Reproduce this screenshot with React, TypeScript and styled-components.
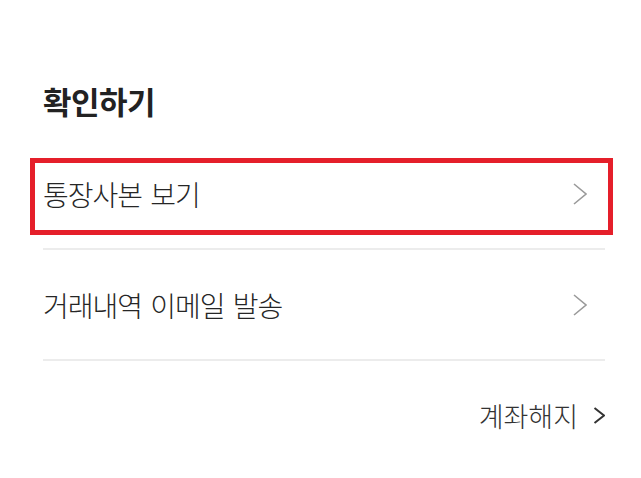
import React from "react";
import styled, { createGlobalStyle } from "styled-components";

const GlobalStyle = createGlobalStyle`
  html, body {
    margin: 0;
    padding: 0;
    background: #ffffff;
  }
  body {
    font-family: "Noto Sans CJK KR", "Noto Sans", sans-serif;
    color: #222222;
  }
`;

const Page = styled.div`
  width: 641px;
  height: 478px;
  box-sizing: border-box;
  padding: 82px 36px 0 43px;
  display: flex;
  flex-direction: column;
  background: #ffffff;
`;

const Title = styled.h1`
  margin: 0 0 20px 0;
  font-size: 31px;
  line-height: 37px;
  font-weight: 700;
  letter-spacing: -0.5px;
  color: #222222;
`;

const List = styled.ul`
  list-style: none;
  margin: 0;
  padding: 0;
  display: flex;
  flex-direction: column;
`;

const Row = styled.li`
  position: relative;
  height: 109px;
  display: flex;
  align-items: center;
  justify-content: space-between;
  padding-right: 18px;
  border-bottom: 2px solid #ececec;
`;

const RowLabel = styled.span`
  font-size: 28px;
  font-weight: 300;
  letter-spacing: -1px;
  word-spacing: 3px;
  color: #262626;
`;

const Highlight = styled.div`
  position: absolute;
  left: -13px;
  top: 19px;
  width: 583px;
  height: 77px;
  box-sizing: border-box;
  border: 5px solid #e51f2a;
  pointer-events: none;
`;

const Footer = styled.div`
  height: 109px;
  display: flex;
  align-items: center;
  justify-content: flex-end;
  gap: 15px;
`;

const FooterLabel = styled.span`
  font-size: 27px;
  font-weight: 300;
  letter-spacing: 0;
  color: #333333;
`;

const RowChevron = () => (
  <svg width="14" height="22" viewBox="0 0 14 22" fill="none">
    <polyline
      points="1,1 13,11 1,21"
      stroke="#9a9a9a"
      strokeWidth="1.6"
      strokeLinejoin="miter"
      fill="none"
    />
  </svg>
);

const FooterChevron = () => (
  <svg width="12" height="17" viewBox="0 0 12 17" fill="none">
    <polyline
      points="1.5,1 11,8.5 1.5,16"
      stroke="#333333"
      strokeWidth="2"
      fill="none"
    />
  </svg>
);

const items = [
  { label: "통장사본 보기", highlighted: true },
  { label: "거래내역 이메일 발송", highlighted: false },
];

export default function App() {
  return (
    <>
      <GlobalStyle />
      <Page>
        <Title>확인하기</Title>
        <List>
          {items.map((item) => (
            <Row key={item.label}>
              <RowLabel>{item.label}</RowLabel>
              <RowChevron />
              {item.highlighted && <Highlight />}
            </Row>
          ))}
        </List>
        <Footer>
          <FooterLabel>계좌해지</FooterLabel>
          <FooterChevron />
        </Footer>
      </Page>
    </>
  );
}
